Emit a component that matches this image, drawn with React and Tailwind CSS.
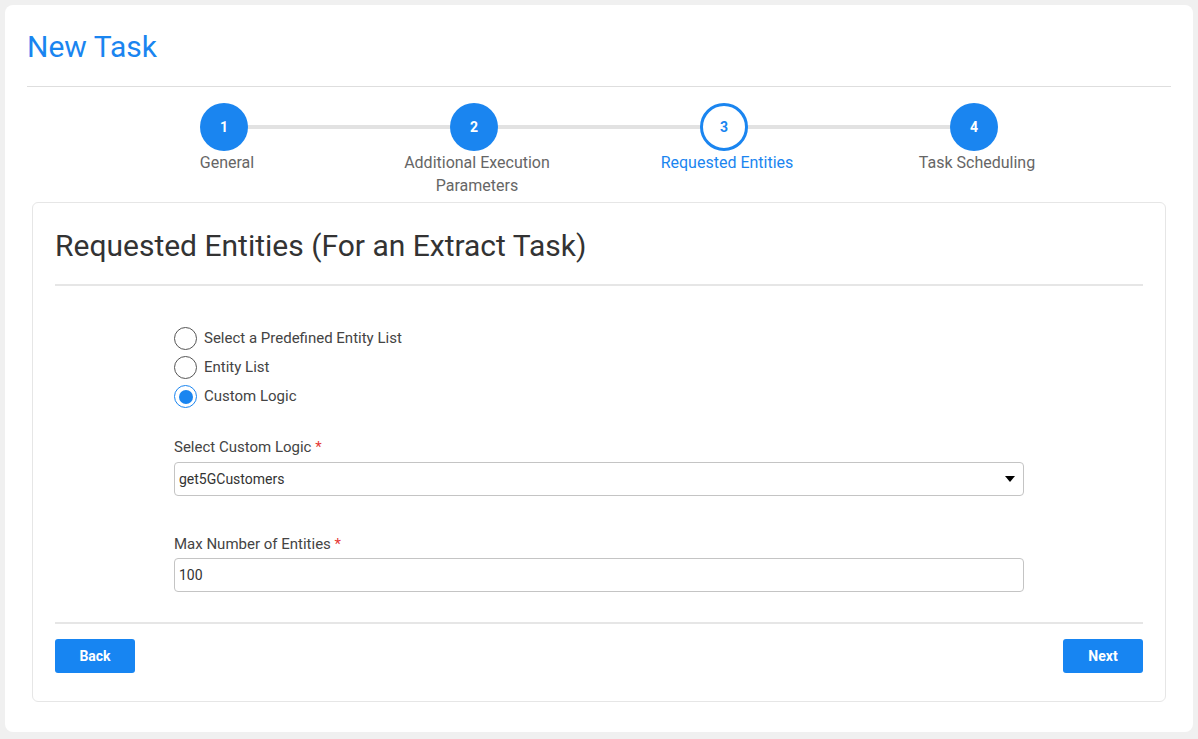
export default function App() {
  const steps = [
    { n: 1, label: "General", state: "done" },
    { n: 2, label: "Additional Execution Parameters", state: "done" },
    { n: 3, label: "Requested Entities", state: "active" },
    { n: 4, label: "Task Scheduling", state: "done" },
  ];

  const options = ["Select a Predefined Entity List", "Entity List", "Custom Logic"];
  const selected = "Custom Logic";

  return (
    <div className="min-h-[739px] bg-[#f0f0f0] p-[5px]" style={{ fontFamily: "Roboto, 'Liberation Sans', sans-serif" }}>
      <div className="bg-white rounded-lg px-[22px] pt-[24px] pb-[30px]">
        <h1 className="text-[30px] leading-[36px] text-[#1a85f0]">New Task</h1>
        <div className="mt-[21px] h-px bg-[#dedede]" />

        {/* Stepper */}
        <div className="relative mx-auto mt-[16px] w-[1000px] grid grid-cols-4">
          <div className="absolute left-[125px] right-[125px] top-[22px] h-[4px] bg-[#e2e2e2]" />
          {steps.map((s) => (
            <div key={s.n} className="relative flex flex-col items-center">
              {s.state === "active" ? (
                <div className="w-[48px] h-[48px] rounded-full bg-white border-[3px] border-[#1a85f0] flex items-center justify-center text-[#1a85f0] text-[14px] font-bold">
                  {s.n}
                </div>
              ) : (
                <div className="w-[48px] h-[48px] rounded-full bg-[#1a85f0] flex items-center justify-center text-white text-[14px] font-bold">
                  {s.n}
                </div>
              )}
              <div
                className={`ml-[6px] w-[170px] text-center text-[16px] leading-[23px] ${s.state === "active" ? "text-[#1a85f0]" : "text-[#666]"}`}
              >
                {s.label}
              </div>
            </div>
          ))}
        </div>

        {/* Inner card */}
        <div className="mx-[5px] mt-[5px] border border-[#e6e6e6] rounded-md px-[22px] pt-[25px] pb-[28px]">
          <h2 className="text-[30px] leading-[36px] text-[#333]">Requested Entities (For an Extract Task)</h2>
          <div className="mt-[20px] h-[2px] bg-[#e6e6e6]" />

          <div className="mx-[119px] mt-[38px]">
            <div className="flex flex-col">
              {options.map((o) => (
                <label key={o} className="h-[29px] flex items-center gap-[7px] text-[15px] text-[#444]">
                  {o === selected ? (
                    <span className="w-[23px] h-[23px] rounded-full border-[1.5px] border-[#1a85f0] flex items-center justify-center">
                      <span className="w-[14px] h-[14px] rounded-full bg-[#1a85f0]" />
                    </span>
                  ) : (
                    <span className="w-[23px] h-[23px] rounded-full border border-[#555]" />
                  )}
                  {o}
                </label>
              ))}
            </div>

            <div className="mt-[25px] text-[15px] leading-[22px] text-[#444]">
              Select Custom Logic <span className="text-[#e53935]">*</span>
            </div>
            <div className="mt-[4px] h-[34px] border border-[#c4c4c4] rounded-[4px] flex items-center justify-between pl-[4px] pr-[8px] text-[14px] text-[#333]">
              <span>get5GCustomers</span>
              <svg width="10" height="6" viewBox="0 0 10 6">
                <path d="M0 0 L10 0 L5 6 Z" fill="#000" />
              </svg>
            </div>

            <div className="mt-[37px] text-[15px] leading-[22px] text-[#444]">
              Max Number of Entities <span className="text-[#e53935]">*</span>
            </div>
            <div className="mt-[3px] h-[34px] border border-[#c4c4c4] rounded-[4px] flex items-center pl-[4px] text-[14px] text-[#333]">
              100
            </div>
          </div>

          <div className="mt-[30px] h-[2px] bg-[#e6e6e6]" />
          <div className="mt-[15px] flex justify-between">
            <button className="w-[80px] h-[34px] rounded-[3px] bg-[#1785f2] text-white text-[14px] font-bold">Back</button>
            <button className="w-[80px] h-[34px] rounded-[3px] bg-[#1785f2] text-white text-[14px] font-bold">Next</button>
          </div>
        </div>
      </div>
    </div>
  );
}
